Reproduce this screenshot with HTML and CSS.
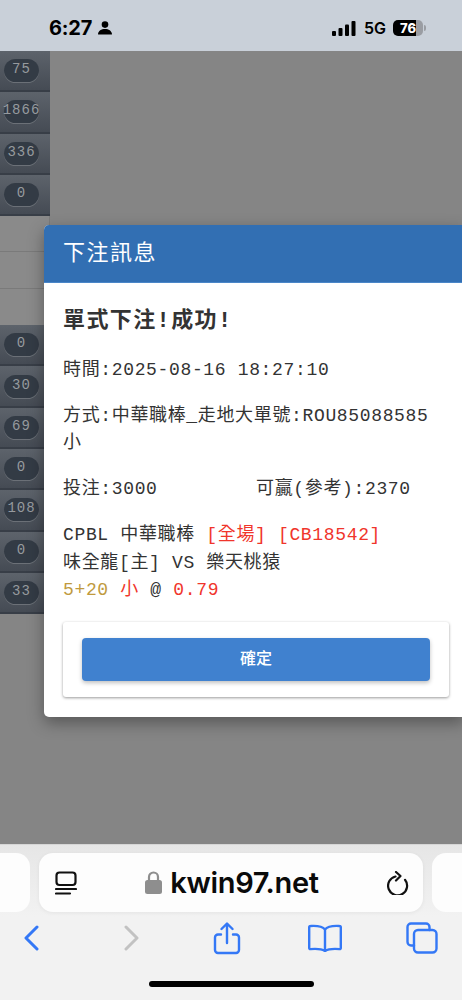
FILE: index.html
```html
<!DOCTYPE html>
<html lang="zh-Hant">
<head>
<meta charset="utf-8">
<title>下注訊息</title>
<link rel="stylesheet" href="styles.css">
</head>
<body>
<header class="status">
  <div class="status-left">
    <span class="time">6:27</span>
    <svg class="person" viewBox="0 0 14 14"><circle cx="7" cy="3.6" r="3.3"/><path d="M.6 13.6c-.4 0-.6-.3-.6-.7C.4 10 3.2 8 7 8s6.600 2 7 4.900c0 .4-.2.7-.6.7z"/></svg>
  </div>
  <div class="status-right">
    <svg class="signal" viewBox="0 0 24 15"><rect x="0" y="10" width="4" height="5" rx="1"/><rect x="6.500" y="7" width="4" height="8" rx="1"/><rect x="13" y="3.500" width="4" height="11.500" rx="1"/><rect x="19.500" y="0" width="4" height="15" rx="1"/></svg>
    <span class="net">5G</span>
    <div class="battery"><span class="battery-num">76</span></div>
    <span class="battery-cap"></span>
  </div>
</header>

<main class="page">
  <aside class="side">
    <div class="row"><span class="pill">75</span></div>
    <div class="row"><span class="pill">1866</span></div>
    <div class="row"><span class="pill">336</span></div>
    <div class="row"><span class="pill">0</span></div>
    <div class="blank"></div>
    <div class="blank"></div>
    <div class="blank"></div>
    <div class="row"><span class="pill">0</span></div>
    <div class="row"><span class="pill">30</span></div>
    <div class="row"><span class="pill">69</span></div>
    <div class="row"><span class="pill">0</span></div>
    <div class="row"><span class="pill">108</span></div>
    <div class="row"><span class="pill">0</span></div>
    <div class="row"><span class="pill">33</span></div>
  </aside>

  <section class="modal">
    <h2 class="modal-head">下注訊息</h2>
    <div class="modal-body">
      <h3 class="result">單式下注!成功!</h3>
      <p class="line">時間:2025-08-16 18:27:10</p>
      <p class="line">方式:中華職棒_走地大單號:ROU85088585<br>小</p>
      <p class="line stake"><span class="stake-a">投注:3000</span><span>可贏(參考):2370</span></p>
      <div class="detail">
        <div>CPBL 中華職棒 <span class="red">[全場] [CB18542]</span></div>
        <div>味全龍[主] VS 樂天桃猿</div>
        <div><span class="gold">5+20</span> <span class="red">小</span> @ <span class="red">0.79</span></div>
      </div>
      <div class="card"><button class="ok">確定</button></div>
    </div>
  </section>
</main>

<footer class="browser">
  <div class="tabs">
    <div class="tab-edge left"></div>
    <div class="url">
      <svg class="reader" viewBox="0 0 22 24"><rect x="1.500" y="1.500" width="19" height="12.500" rx="3"/><path d="M1 18h20M1 22.500h14"/></svg>
      <div class="address">
        <svg class="lock" viewBox="0 0 17 23"><path d="M4 10V6a4.500 4.500 0 0 1 9 0v4" fill="none" stroke="#8e8e8e" stroke-width="2.200"/><rect x="0" y="9" width="17" height="14" rx="2.500" fill="#8e8e8e"/></svg>
        <span class="domain">kwin97.net</span>
      </div>
      <svg class="reload" viewBox="0 0 22 24"><path d="M8.500 5.500A9.500 9.500 0 1 0 18 8.800" /><path d="M9 1l4.500 4L9 9.500" /></svg>
    </div>
    <div class="tab-edge right"></div>
  </div>
  <nav class="tools">
    <svg class="tool-sm" viewBox="0 0 16 26"><path d="M14 2L3 13l11 11"/></svg>
    <svg class="tool-sm off" viewBox="0 0 16 26"><path d="M2 2l11 11L2 24"/></svg>
    <svg class="tool-share" viewBox="0 0 28 33"><path d="M8 12.500H5a3 3 0 0 0-3 3V28a3 3 0 0 0 3 3h18a3 3 0 0 0 3-3V15.500a3 3 0 0 0-3-3h-3"/><path d="M14 21V2M8.500 7L14 1.500 19.500 7"/></svg>
    <svg class="tool-book" viewBox="0 0 34 28"><path d="M17 5.500C14.500 2.500 10 1.500 2.500 2 1.700 2 1.200 2.500 1.200 3.300V24c0 .7.500 1.200 1.300 1.100 6.500-.6 11.500 0 14.500 2 3-2 8-2.600 14.500-2 .8.100 1.300-.4 1.300-1.100V3.300c0-.8-.5-1.300-1.300-1.300C24 1.500 19.500 2.500 17 5.500zM17 5.500V27"/></svg>
    <svg class="tool-tabs" viewBox="0 0 32 32"><rect x="8" y="8" width="22.500" height="22.500" rx="4"/><path d="M8 23.500H5a3.500 3.500 0 0 1-3.500-3.500V5A3.500 3.500 0 0 1 5 1.500h15A3.500 3.500 0 0 1 23.500 5v3"/></svg>
  </nav>
  <div class="home"></div>
</footer>
</body>
</html>
```
FILE: styles.css
```css
* { box-sizing: border-box; }
html, body { margin: 0; padding: 0; }
body {
  width: 462px;
  height: 1000px;
  overflow: hidden;
  display: flex;
  flex-direction: column;
  font-family: "Liberation Mono", "Noto Sans CJK TC", monospace;
  background: #858585;
}

/* status bar */
.status {
  height: 51px;
  flex: none;
  background: #c9d0d9;
  display: flex;
  justify-content: space-between;
  align-items: center;
  padding: 5px 36px 0 49px;
  font-family: Inter, "Liberation Sans", sans-serif;
  color: #000;
}
.status-left, .status-right { display: flex; align-items: center; }
.time { font-size: 20px; font-weight: 700; letter-spacing: -.2px; }
.person { width: 14px; height: 14px; margin-left: 6px; fill: #000; }
.signal { width: 24px; height: 15px; fill: #000; margin-right: 8px; margin-left: 1px; }
.net { font-size: 16px; font-weight: 600; margin-right: 7px; }
.battery {
  width: 30px;
  height: 16px;
  border-radius: 5px;
  background: linear-gradient(90deg, #000 76%, #9a9da3 76%);
  display: flex;
  align-items: center;
  justify-content: center;
}
.battery-num { font-size: 13px; font-weight: 800; color: #fff; }
.battery-cap { width: 2px; height: 6px; margin-left: 1px; border-radius: 0 2px 2px 0; background: #9a9da3; }

/* dimmed page */
.page {
  flex: 1;
  position: relative;
  min-height: 0;
  background: #858585;
}
.side { width: 50px; display: flex; flex-direction: column; }
.row {
  height: 41.300px;
  flex: none;
  display: flex;
  align-items: center;
  padding: 0 0 0 4px;
  background: linear-gradient(#5d636b, #454b54);
  border-bottom: 2px solid #383e47;
}
.pill {
  width: 35px;
  height: 23px;
  border-radius: 12px;
  background: #333b45;
  box-shadow: 0 1px 0 #6b7077;
  color: #969a9e;
  font-size: 14px;
  letter-spacing: 1px;
  line-height: 21px;
  text-align: center;
  white-space: nowrap;
  display: flex;
  justify-content: center;
}
.blank {
  height: 36.300px;
  flex: none;
  background: #8a8a8a;
  border-right: 1px solid #7b7b7b;
  border-bottom: 1px solid #7a7a7a;
}
.blank:nth-child(7) { border-bottom: 0; }

/* modal */
.modal {
  position: absolute;
  left: 44px;
  top: 174px;
  width: 420px;
  height: 492px;
  background: #fff;
  border-radius: 5px 0 0 5px;
  box-shadow: 0 6px 16px rgba(0, 0, 0, .35);
  color: #333;
  overflow: hidden;
}
.modal-head {
  margin: 0;
  height: 58px;
  padding-left: 19px;
  background: #326fb3;
  border-bottom: 1px solid #4a86c8;
  color: #fff;
  font-size: 22px;
  font-weight: 400;
  letter-spacing: 1.500px;
  line-height: 60px;
}
.modal-body { padding: 23px 19px 0; }
.result {
  margin: 0 0 19px;
  font-size: 22px;
  font-weight: 700;
  letter-spacing: 1.400px;
  line-height: 32px;
}
.line {
  margin: 0 0 19px;
  font-size: 18px;
  letter-spacing: .65px;
  line-height: 27px;
  white-space: nowrap;
}
.stake { display: flex; margin-bottom: 19px; }
.stake-a { width: 193px; }
.detail {
  font-size: 18px;
  letter-spacing: .65px;
  line-height: 27.500px;
}
.red { color: #f0352b; }
.gold { color: #c09a3e; }
.card {
  width: 386px;
  height: 75px;
  margin: 17px 0 0 0;
  padding: 16px 19px;
  border-radius: 3px;
  background: #fff;
  box-shadow: 0 1px 3px rgba(0, 0, 0, .4);
}
.ok {
  display: block;
  width: 348px;
  height: 43px;
  padding: 0 0 5px;
  border: 0;
  border-radius: 4px;
  background: #4081cf;
  box-shadow: 0 2px 4px rgba(0, 0, 0, .25);
  color: #fff;
  font-family: "Noto Sans CJK TC", sans-serif;
  font-size: 16px;
  font-weight: 500;
}

/* browser chrome */
.browser {
  height: 156px;
  flex: none;
  background: linear-gradient(#e6e6e6, #f2f2f2 72px);
  border-top: 1px solid #d6d6d6;
  display: flex;
  flex-direction: column;
}
.tabs {
  display: flex;
  gap: 9px;
  margin-top: 8px;
  height: 59px;
}
.tab-edge { width: 30px; flex: none; background: #fdfdfd; }
.tab-edge.left { border-radius: 0 14px 14px 0; }
.tab-edge.right { border-radius: 14px 0 0 14px; }
.url {
  width: 384px;
  flex: none;
  background: #fdfdfd;
  border-radius: 14px;
  display: flex;
  align-items: center;
  justify-content: space-between;
  padding: 0 14px 0 16px;
  box-shadow: 0 1px 4px rgba(0, 0, 0, .06);
}
.reader, .reload { fill: none; stroke: #111; stroke-width: 2.200; stroke-linecap: round; stroke-linejoin: round; }
.reader { width: 22px; height: 24px; }
.reload { width: 22px; height: 24px; }
.address { display: flex; align-items: center; }
.lock { width: 17px; height: 23px; margin-right: 8px; }
.domain {
  font-family: Inter, "Liberation Sans", sans-serif;
  font-size: 29px;
  font-weight: 600;
  letter-spacing: -.3px;
  color: #0a0a0a;
}
.tools {
  display: flex;
  align-items: center;
  height: 44px;
  margin-top: 4px;
  padding-left: 23px;
}
.tools svg { flex: none; fill: none; stroke: #3478f6; stroke-width: 2.400; stroke-linecap: round; stroke-linejoin: round; }
.tools .tool-sm { width: 16px; height: 26px; stroke-width: 3; }
.tools .off { stroke: #c2c2c2; margin-left: 85px; }
.tool-share { width: 28px; height: 33px; margin-left: 73px; }
.tool-book { width: 34px; height: 28px; margin-left: 67px; }
.tool-tabs { width: 32px; height: 32px; margin-left: 64px; }
.home {
  width: 165px;
  height: 6px;
  margin: 21px auto 0;
  border-radius: 3px;
  background: #000;
}
```
